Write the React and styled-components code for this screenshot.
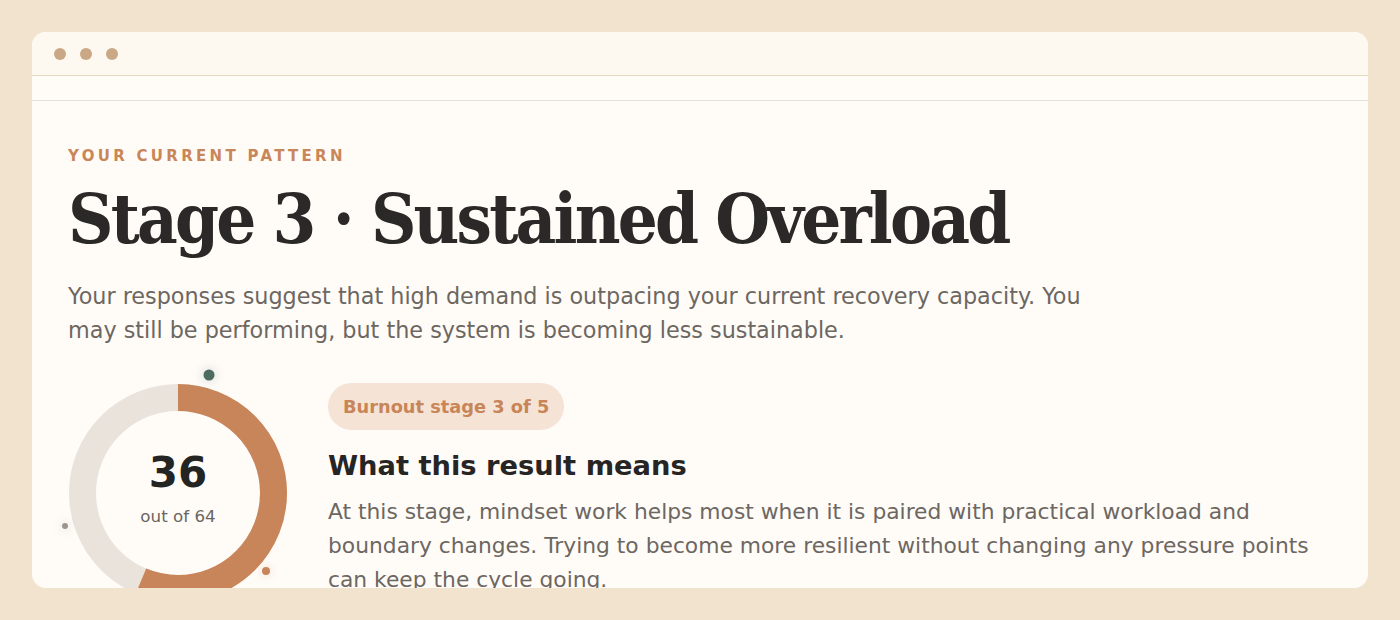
import styled, { createGlobalStyle } from "styled-components";

const Global = createGlobalStyle`
  html, body {
    margin: 0;
    background: #f1e3cd;
  }
  body {
    font-family: "DejaVu Sans", sans-serif;
  }
`;

const Page = styled.div`
  padding: 32px;
  height: 620px;
  box-sizing: border-box;
`;

const Window = styled.div`
  background: #fffcf8;
  border-radius: 14px;
  height: 556px;
  overflow: hidden;
  display: flex;
  flex-direction: column;
`;

const TitleBar = styled.div`
  flex-shrink: 0;
  height: 43px;
  background: #fdf8f0;
  border-bottom: 1px solid #e6d7bf;
  display: flex;
  align-items: center;
  gap: 14px;
  padding-left: 22px;
`;

const Dot = styled.span`
  width: 12px;
  height: 12px;
  border-radius: 50%;
  background: #caa886;
`;

const Strip = styled.div`
  flex-shrink: 0;
  height: 24px;
  background: #fffcf7;
  border-bottom: 1px solid #e5e1da;
`;

const Content = styled.div`
  flex-shrink: 0;
  padding: 46px 36px 0;
`;

const Eyebrow = styled.div`
  font-size: 15px;
  font-weight: 700;
  letter-spacing: 3.3px;
  color: #c98658;
  text-transform: uppercase;
`;

const Title = styled.h1`
  margin: 12px 0 0;
  font-family: "DejaVu Serif Condensed", "DejaVu Serif", serif;
  font-stretch: condensed;
  font-size: 70px;
  line-height: 84px;
  font-weight: 700;
  color: #2a2927;
  letter-spacing: -2.8px;
`;

const Lead = styled.p`
  margin: 18px 0 0;
  max-width: 1040px;
  font-size: 22.3px;
  line-height: 34px;
  color: #6d6762;
`;

const Row = styled.div`
  display: flex;
  gap: 40px;
  margin-top: 36px;
`;

const RingWrap = styled.div`
  position: relative;
  width: 220px;
  height: 220px;
  flex-shrink: 0;
`;

const RingCenter = styled.div`
  position: absolute;
  inset: 0;
  padding-bottom: 8px;
  display: flex;
  flex-direction: column;
  align-items: center;
  justify-content: center;
`;

const Score = styled.div`
  font-size: 42px;
  font-weight: 700;
  color: #242422;
  line-height: 1;
`;

const ScoreSub = styled.div`
  margin-top: 12px;
  font-size: 16.7px;
  color: #6a6560;
`;

const Orb = styled.span`
  position: absolute;
  left: ${(p) => p.x}px;
  top: ${(p) => p.y}px;
  width: ${(p) => p.size}px;
  height: ${(p) => p.size}px;
  border-radius: 50%;
  background: ${(p) => p.color};
  box-shadow: 0 0 8px 3px ${(p) => p.color}22;
  transform: translate(-50%, -50%);
`;

const Details = styled.div`
  flex: 1;
`;

const Pill = styled.div`
  display: inline-block;
  padding: 0 15px;
  height: 47px;
  line-height: 47px;
  border-radius: 24px;
  background: #f5e3d6;
  color: #c88558;
  font-size: 17.8px;
  font-weight: 700;
`;

const SubTitle = styled.h2`
  margin: 20px 0 0;
  font-size: 27.3px;
  font-weight: 700;
  color: #262523;
`;

const Body = styled.p`
  margin: 14px 0 0;
  font-size: 21.8px;
  line-height: 34px;
  color: #6d6762;
`;

function Ring({ value, max }) {
  const r = 95.5;
  const c = 2 * Math.PI * r;
  const frac = value / max;
  return (
    <RingWrap>
      <svg width="220" height="220" viewBox="0 0 220 220">
        <circle cx="110" cy="110" r={r} fill="none" stroke="#e9e3db" strokeWidth="27" />
        <circle
          cx="110"
          cy="110"
          r={r}
          fill="none"
          stroke="#c9855a"
          strokeWidth="27"
          strokeDasharray={`${c * frac} ${c}`}
          transform="rotate(-90 110 110)"
        />
      </svg>
      <RingCenter>
        <Score>{value}</Score>
        <ScoreSub>out of {max}</ScoreSub>
      </RingCenter>
      <Orb x={141} y={-8} size={11} color="#4e6b62" />
      <Orb x={-3} y={143} size={6} color="#9c958d" />
      <Orb x={198} y={188} size={8} color="#c9855a" />
    </RingWrap>
  );
}

export default function App() {
  return (
    <>
      <Global />
      <Page>
        <Window>
          <TitleBar>
            <Dot />
            <Dot />
            <Dot />
          </TitleBar>
          <Strip />
          <Content>
            <Eyebrow>Your current pattern</Eyebrow>
            <Title>Stage 3 · Sustained Overload</Title>
            <Lead>
              Your responses suggest that high demand is outpacing your current
              recovery capacity. You may still be performing, but the system is
              becoming less sustainable.
            </Lead>
            <Row>
              <Ring value={36} max={64} />
              <Details>
                <Pill>Burnout stage 3 of 5</Pill>
                <SubTitle>What this result means</SubTitle>
                <Body>
                  At this stage, mindset work helps most when it is paired with
                  practical workload and boundary changes. Trying to become more
                  resilient without changing any pressure points can keep the
                  cycle going.
                </Body>
              </Details>
            </Row>
          </Content>
        </Window>
      </Page>
    </>
  );
}
